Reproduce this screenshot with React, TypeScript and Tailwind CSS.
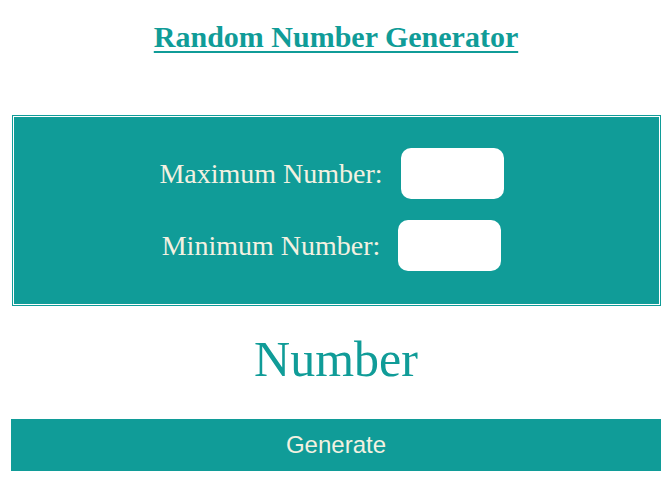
export default function App() {
  return (
    <div className="min-h-screen bg-white pl-[11px] pr-[8px] pb-5 font-['Liberation_Serif','Times_New_Roman',serif]">
      <h1 className="pt-[22px] text-center text-[30px] font-bold leading-none text-[#109c98] underline decoration-2 underline-offset-[4px]">
        Random Number Generator
      </h1>

      {/* double-line frame */}
      <div className="mt-[63px] ml-px bg-[#109c98] p-px">
        <div className="bg-white p-px">
          <div className="flex flex-col items-center gap-[21px] bg-[#109c98] pt-[31px] pb-[33px] pr-[10px]">
            <div className="flex items-center gap-[18px]">
              <label className="text-[28px] leading-none text-[#f3f1e1]">Maximum Number:</label>
              <input className="h-[51px] w-[103px] rounded-[10px] bg-white outline-none" />
            </div>
            <div className="flex items-center gap-[18px]">
              <label className="text-[28px] leading-none text-[#f3f1e1]">Minimum Number:</label>
              <input className="h-[51px] w-[103px] rounded-[10px] bg-white outline-none" />
            </div>
          </div>
        </div>
      </div>

      <p className="mt-[28px] text-center text-[50px] leading-none text-[#109c98]">Number</p>

      <button className="mt-[35px] flex h-[52px] w-full items-center justify-center bg-[#109c98] font-['Liberation_Sans',Arial,sans-serif] text-[24px] text-[#f3f1e1]">
        Generate
      </button>
    </div>
  );
}
